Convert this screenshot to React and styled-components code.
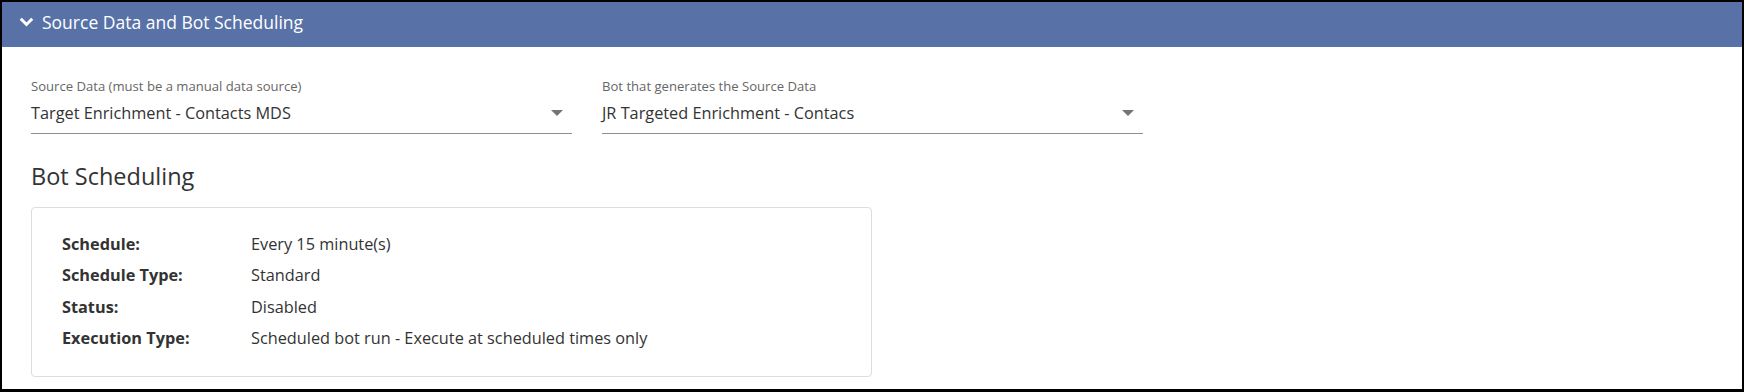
import React from 'react'
import styled, { createGlobalStyle } from 'styled-components'

const GlobalStyle = createGlobalStyle`
  html, body {
    margin: 0;
    padding: 0;
    background: #fff;
  }
  body {
    font-family: 'Open Sans', 'Liberation Sans', sans-serif;
    color: #333;
  }
`

const Frame = styled.div`
  box-sizing: border-box;
  width: 1744px;
  height: 392px;
  border: 2px solid #000;
  border-bottom-width: 3px;
  background: #fff;
  overflow: hidden;
`

const Header = styled.div`
  height: 45px;
  box-sizing: border-box;
  padding: 0 0 6px 17px;
  display: flex;
  align-items: center;
  gap: 8px;
  background: #5872a7;
  color: #fff;
  font-size: 17.5px;
`

const Body = styled.div`
  padding: 30px 29px 0;
`

const FieldRow = styled.div`
  display: flex;
  gap: 30px;
`

const Field = styled.div`
  width: 541px;
`

const FieldLabel = styled.div`
  font-size: 13.1px;
  line-height: 18px;
  color: #666;
`

const Select = styled.div`
  margin-top: 7px;
  padding-bottom: 9px;
  border-bottom: 1px solid #8f8f8f;
  display: flex;
  align-items: center;
  justify-content: space-between;
  font-size: 16.3px;
  line-height: 22px;
  color: #333;
`

const Caret = styled.span`
  width: 0;
  height: 0;
  margin-right: 9px;
  border-left: 6px solid transparent;
  border-right: 6px solid transparent;
  border-top: 6px solid #757575;
`

const Heading = styled.h2`
  margin: 27px 0 16px;
  font-size: 23.5px;
  line-height: 30px;
  font-weight: 400;
  color: #333;
`

const Card = styled.div`
  box-sizing: border-box;
  width: 841px;
  padding: 20px 30px 22px;
  border: 1px solid #ddd;
  border-radius: 4px;
  display: grid;
  grid-template-columns: 189px 1fr;
  grid-auto-rows: 31.5px;
  align-items: center;
  font-size: 16.3px;
`

const Term = styled.div`
  font-weight: 700;
  color: #333;
`

const Value = styled.div`
  color: #333;
`

const Chevron = () => (
  <svg width='15' height='10' viewBox='0 0 15 10'>
    <path d='M1.8 1.8 L7.5 7.5 L13.2 1.8' fill='none' stroke='#fff' strokeWidth='3' />
  </svg>
)

const fields = [
  { label: 'Source Data (must be a manual data source)', value: 'Target Enrichment - Contacts MDS' },
  { label: 'Bot that generates the Source Data', value: 'JR Targeted Enrichment - Contacs' }
]

const schedule = [
  ['Schedule:', 'Every 15 minute(s)'],
  ['Schedule Type:', 'Standard'],
  ['Status:', 'Disabled'],
  ['Execution Type:', 'Scheduled bot run - Execute at scheduled times only']
]

export default function App () {
  return (
    <>
      <GlobalStyle />
      <Frame>
        <Header>
          <Chevron />
          <span>Source Data and Bot Scheduling</span>
        </Header>
        <Body>
          <FieldRow>
            {fields.map(f => (
              <Field key={f.label}>
                <FieldLabel>{f.label}</FieldLabel>
                <Select>
                  <span>{f.value}</span>
                  <Caret />
                </Select>
              </Field>
            ))}
          </FieldRow>
          <Heading>Bot Scheduling</Heading>
          <Card>
            {schedule.map(([k, v]) => (
              <React.Fragment key={k}>
                <Term>{k}</Term>
                <Value>{v}</Value>
              </React.Fragment>
            ))}
          </Card>
        </Body>
      </Frame>
    </>
  )
}
